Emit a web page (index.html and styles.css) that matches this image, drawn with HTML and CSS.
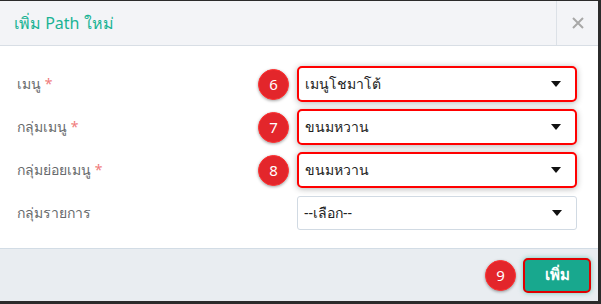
FILE: index.html
```html
<!DOCTYPE html>
<html lang="th">
<head>
    <meta charset="UTF-8">
    <title>เพิ่ม Path ใหม่</title>
    <link rel="stylesheet" href="styles.css">
</head>
<body>
    <div class="modal">
        <div class="modal-header">
            <h4 class="modal-title">เพิ่ม Path ใหม่</h4>
            <button class="close" type="button">
                <svg width="12" height="12" viewBox="0 0 12 12"><path d="M1 1L11 11M11 1L1 11"/></svg>
            </button>
        </div>

        <div class="modal-body">
            <div class="form-row">
                <label>เมนู <span class="req">*</span></label>
                <span class="step">6</span>
                <div class="select marked">
                    <span>เมนูโชมาโต้</span>
                    <svg class="caret" width="10" height="6" viewBox="0 0 10 6"><path d="M0 0h10L5 6z"/></svg>
                </div>
            </div>
            <div class="form-row">
                <label>กลุ่มเมนู <span class="req">*</span></label>
                <span class="step">7</span>
                <div class="select marked">
                    <span>ขนมหวาน</span>
                    <svg class="caret" width="10" height="6" viewBox="0 0 10 6"><path d="M0 0h10L5 6z"/></svg>
                </div>
            </div>
            <div class="form-row">
                <label>กลุ่มย่อยเมนู <span class="req">*</span></label>
                <span class="step">8</span>
                <div class="select marked">
                    <span>ขนมหวาน</span>
                    <svg class="caret" width="10" height="6" viewBox="0 0 10 6"><path d="M0 0h10L5 6z"/></svg>
                </div>
            </div>
            <div class="form-row">
                <label>กลุ่มรายการ</label>
                <span></span>
                <div class="select">
                    <span>--เลือก--</span>
                    <svg class="caret" width="10" height="6" viewBox="0 0 10 6"><path d="M0 0h10L5 6z"/></svg>
                </div>
            </div>
        </div>

        <div class="modal-footer">
            <span class="step">9</span>
            <button class="btn-primary marked" type="button">เพิ่ม</button>
        </div>
    </div>
</body>
</html>
```

FILE: styles.css
```css
body {
    margin: 0;
    background-color: #2b2b2b;
    font-family: Tahoma, "Noto Sans", "Open Sans", Arial, sans-serif;
    font-size: 14px;
}
.modal {
    width: 598px;
    height: 300px;
    margin-top: 1px;
    background: white;
    display: flex;
    flex-direction: column;
}
.modal-header {
    height: 44px;
    display: flex;
    align-items: stretch;
    background-color: #f3f4f7;
    border-bottom: 1px solid #d8dee5;
}
.modal-title {
    flex: 1;
    margin: 0;
    padding-left: 14px;
    display: flex;
    align-items: center;
    font-size: 16px;
    font-weight: normal;
    color: #1ab394;
}
.close {
    width: 42px;
    border: none;
    border-left: 1px solid #dce1e7;
    background: transparent;
    padding: 0;
    display: flex;
    align-items: center;
    justify-content: center;
}
.close svg {
    stroke: #a8a8a8;
    stroke-width: 2;
}
.modal-body {
    flex: 1;
    padding: 20px 21px 0 17px;
    display: flex;
    flex-direction: column;
    gap: 7px;
}
.form-row {
    display: grid;
    grid-template-columns: 1fr 30px 280px;
    column-gap: 9px;
    align-items: center;
    height: 36px;
}
.form-row label {
    color: #676a6c;
}
.req {
    color: #f07b7b;
}
.step {
    width: 29px;
    height: 29px;
    border-radius: 50%;
    background: #e3262b;
    border: 1px solid #ff3030;
    box-shadow: 0 1px 3px rgba(0,0,0,0.35);
    color: white;
    font-size: 15px;
    display: flex;
    align-items: center;
    justify-content: center;
}
.select {
    height: 34px;
    box-sizing: border-box;
    border: 1px solid #d1dae3;
    border-radius: 3px;
    padding: 0 14px 0 6px;
    display: flex;
    align-items: center;
    justify-content: space-between;
    color: #222;
    background: white;
}
.select.marked {
    height: 36px;
    border: 2px solid #ff0000;
    border-radius: 5px;
    box-shadow: 0 1px 6px rgba(0,0,0,0.3);
}
.caret {
    fill: #111;
}
.modal-footer {
    height: 52px;
    border-top: 1px solid #d2dce5;
    background-color: #e9edf1;
    display: flex;
    align-items: center;
    justify-content: flex-end;
    gap: 7px;
    padding-right: 7px;
}
.btn-primary {
    width: 68px;
    height: 35px;
    background-color: #18a88e;
    color: white;
    font-family: inherit;
    font-size: 15px;
    font-weight: bold;
    border: 2px solid #e00000;
    border-radius: 5px;
    box-shadow: 0 0 5px rgba(26,179,148,0.6);
}
```
